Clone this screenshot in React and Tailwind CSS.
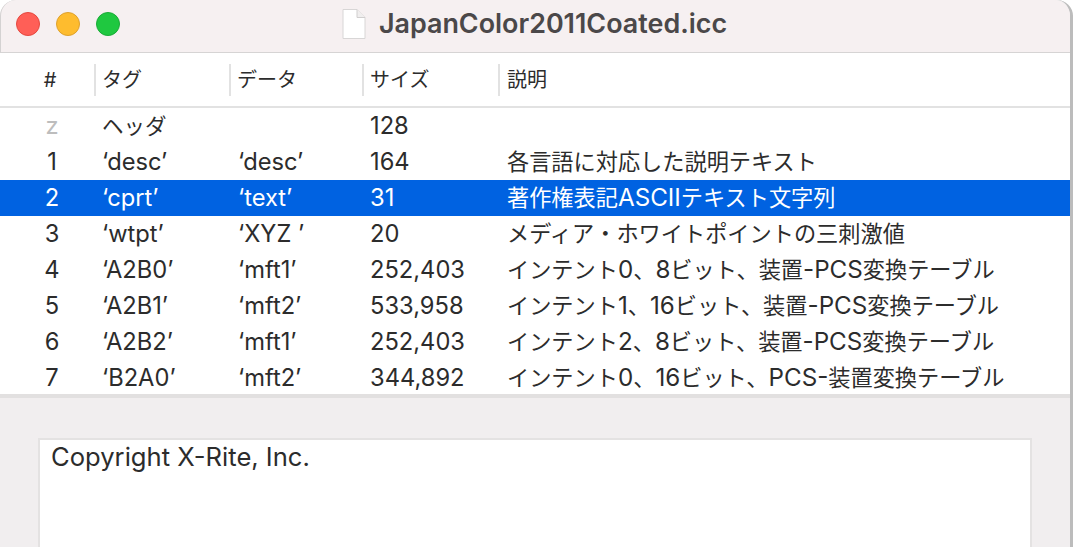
const rows = [
  ['z', 'ヘッダ', '', '128', ''],
  ['1', '‘desc’', '‘desc’', '164', '各言語に対応した説明テキスト'],
  ['2', '‘cprt’', '‘text’', '31', '著作権表記ASCIIテキスト文字列'],
  ['3', '‘wtpt’', '‘XYZ ’', '20', 'メディア・ホワイトポイントの三刺激値'],
  ['4', '‘A2B0’', '‘mft1’', '252,403', 'インテント0、8ビット、装置-PCS変換テーブル'],
  ['5', '‘A2B1’', '‘mft2’', '533,958', 'インテント1、16ビット、装置-PCS変換テーブル'],
  ['6', '‘A2B2’', '‘mft1’', '252,403', 'インテント2、8ビット、装置-PCS変換テーブル'],
  ['7', '‘B2A0’', '‘mft2’', '344,892', 'インテント0、16ビット、PCS-装置変換テーブル'],
];

const font = { fontFamily: '"Inter", "Noto Sans CJK JP", sans-serif' };

function Mixed({ text }) {
  return text.split(/([A-Za-z0-9\-]+)/).map((part, i) =>
    i % 2 === 1 ? (
      <span key={i} className="text-[24.2px]">{part}</span>
    ) : (
      <span key={i}>{part}</span>
    )
  );
}

function Row({ r, i }) {
  const sel = i === 2;
  return (
    <div className={`flex h-9 items-center text-[23.7px] leading-9 ${sel ? 'bg-[#0062e1] text-white' : 'text-[#2c2c2c]'}`}>
      <div className={`w-[102px] shrink-0 pl-[2px] text-center ${i === 0 ? 'text-[#bdbdbd]' : ''}`}>{r[0]}</div>
      <div className={`w-[136px] shrink-0 whitespace-pre ${i === 0 ? 'text-[21.5px]' : ''}`}>{r[1]}</div>
      <div className="w-[132px] shrink-0 whitespace-pre">{r[2]}</div>
      <div className="w-[137px] shrink-0">{r[3]}</div>
      <div className="whitespace-nowrap text-[22.2px]"><Mixed text={r[4]} /></div>
    </div>
  );
}

export default function App() {
  return (
    <div className="h-[547px] w-[1074px] overflow-hidden bg-white" style={font}>
      <div className="flex h-[547px] w-[1073px] flex-col rounded-tl-[16px] rounded-tr-[16px] border-r-[3px] border-r-[#bcbcbc] bg-[#f1eeef]">
        <div className="relative flex h-[53px] shrink-0 items-center justify-center rounded-tl-[16px] rounded-tr-[16px] border-b border-l border-b-[#d6d4d4] border-l-[#d4d2d2] bg-[#f6f0f1]">
          <div className="absolute left-[15px] top-[12px] flex gap-[16px]">
            <div className="h-[24px] w-[24px] rounded-full border border-[#e5483f] bg-[#ff5f57]" />
            <div className="h-[24px] w-[24px] rounded-full border border-[#dea12d] bg-[#febc2e]" />
            <div className="h-[24px] w-[24px] rounded-full border border-[#1aab37] bg-[#1fc840]" />
          </div>
          <div className="ml-[-2px] mt-[-5px] flex items-center gap-[13px]">
            <svg width="24" height="32" viewBox="0 0 24 32">
              <path d="M1 1.5 H15 L23 9.5 V30.5 H1 Z" fill="#ffffff" stroke="#d8d6d6" strokeWidth="1" />
              <path d="M15 1.5 V9.5 H23" fill="#f0eeee" stroke="#d0cece" strokeWidth="1" />
            </svg>
            <span className="text-[26.9px] font-semibold leading-none text-[#4b4849]">JapanColor2011Coated.icc</span>
          </div>
        </div>

        <div className="flex h-[55px] shrink-0 items-center border-b-2 border-[#e2e2e2] bg-white text-[20px] text-[#2c2c2c]">
          <div className="w-[94px] shrink-0 text-center">
            <span className="ml-[6px]">#</span>
          </div>
          <div className="h-[32px] w-[135px] shrink-0 border-l-2 border-[#e2e2e2] pl-[6px] leading-[32px]">タグ</div>
          <div className="h-[32px] w-[133px] shrink-0 border-l-2 border-[#e2e2e2] pl-[6px] leading-[32px]">データ</div>
          <div className="h-[32px] w-[136px] shrink-0 border-l-2 border-[#e2e2e2] pl-[6px] leading-[32px]">サイズ</div>
          <div className="h-[32px] flex-1 border-l-2 border-[#e2e2e2] pl-[7px] leading-[32px]">説明</div>
        </div>

        <div className="h-[286px] shrink-0 overflow-hidden bg-white">
          {rows.map((r, i) => (
            <Row key={r[0]} r={r} i={i} />
          ))}
        </div>

        <div className="h-[4px] shrink-0 bg-[#e2e0e0]" />

        <div className="flex-1 px-[38px] pt-[40px]">
          <div className="h-[200px] w-[994px] border-2 border-[#e4e2e2] bg-white px-[11px] text-[25.6px] leading-[33px] text-[#2c2c2c]">
            Copyright X-Rite, Inc.
          </div>
        </div>
      </div>
    </div>
  );
}
